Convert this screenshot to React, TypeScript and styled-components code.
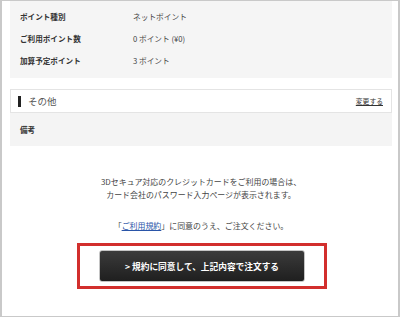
import React from 'react'
import styled, { createGlobalStyle } from 'styled-components'

const GlobalStyle = createGlobalStyle`
  html, body {
    margin: 0;
    padding: 0;
    background: #ffffff;
    font-family: "Noto Sans CJK JP", "Noto Sans", sans-serif;
    color: #333333;
  }
  * { box-sizing: border-box; }
`

type Row = {
  label: string,
  value: string
}

const rows: Row[] = [
  { label: 'ポイント種別', value: 'ネットポイント' },
  { label: 'ご利用ポイント数', value: '0 ポイント (¥0)' },
  { label: '加算予定ポイント', value: '3 ポイント' },
]

const App = () => {
  return (
    <>
      <GlobalStyle />
      <Frame>
        <InfoPanel>
          {rows.map((row) => (
            <InfoRow key={row.label}>
              <Label>{row.label}</Label>
              <Value>{row.value}</Value>
            </InfoRow>
          ))}
        </InfoPanel>

        <SectionHeader>
          <Title>その他</Title>
          <EditLink href="#">変更する</EditLink>
        </SectionHeader>
        <RemarkPanel>
          <Label>備考</Label>
        </RemarkPanel>

        <Notice>
          <p>3Dセキュア対応のクレジットカードをご利用の場合は、<br />カード会社のパスワード入力ページが表示されます。</p>
          <p className="terms">「<a href="#">ご利用規約</a>」に同意のうえ、ご注文ください。</p>
        </Notice>

        <Highlight>
          <OrderButton type="button">&gt; 規約に同意して、上記内容で注文する</OrderButton>
        </Highlight>
      </Frame>
    </>
  )
}

const Frame = styled.div`
  width: 400px;
  height: 317px;
  border-top: 1px solid #c9c9c9;
  border-left: 2px solid #c9c9c9;
  border-right: 2px solid #c9c9c9;
  border-bottom: 1px solid #c9c9c9;
  padding: 0 6px 0 8px;
  overflow: hidden;
  display: flex;
  flex-direction: column;
`

const InfoPanel = styled.div`
  background: #f5f5f5;
  padding: 4px 10px 7px;
  height: 77px;
`

const InfoRow = styled.div`
  display: flex;
  align-items: center;
  height: 22px;
`

const Label = styled.div`
  width: 113px;
  font-size: 7.6px;
  font-weight: bold;
  color: #333;
`

const Value = styled.div`
  font-size: 7.7px;
  color: #444;
`

const SectionHeader = styled.div`
  margin-top: 11px;
  height: 24px;
  border: 1px solid #e4e4e4;
  background: #fff;
  display: flex;
  align-items: center;
  justify-content: space-between;
  padding: 0 8px 0 7px;
`

const Title = styled.div`
  display: flex;
  align-items: center;
  font-size: 9.5px;
  color: #555;
  &::before {
    content: '';
    width: 3px;
    height: 11px;
    background: #222;
    margin-right: 7px;
  }
`

const EditLink = styled.a`
  font-size: 6.8px;
  color: #333;
  text-decoration: underline;
`

const RemarkPanel = styled.div`
  background: #f4f4f4;
  height: 33px;
  display: flex;
  align-items: center;
  padding: 0 10px;
`

const Notice = styled.div`
  text-align: center;
  font-size: 7.95px;
  color: #444;
  padding-top: 29px;
  p {
    margin: 0;
    line-height: 13px;
  }
  .terms {
    margin-top: 18px;
  }
  a {
    color: #2a55a8;
    text-decoration: underline;
  }
`

const Highlight = styled.div`
  align-self: center;
  margin-top: 11px;
  margin-left: 2px;
  width: 250px;
  border: 3px solid #d22f2d;
  padding: 4px 19px;
  display: flex;
  justify-content: center;
`

const OrderButton = styled.button`
  width: 206px;
  height: 32px;
  border: 1px solid #c4c4c4;
  border-radius: 3px;
  background: linear-gradient(#3b3b3b, #1f1f1f);
  color: #fff;
  font-family: "Noto Sans CJK JP", "Noto Sans", sans-serif;
  font-size: 8.7px;
  font-weight: bold;
  cursor: pointer;
`

export default App
